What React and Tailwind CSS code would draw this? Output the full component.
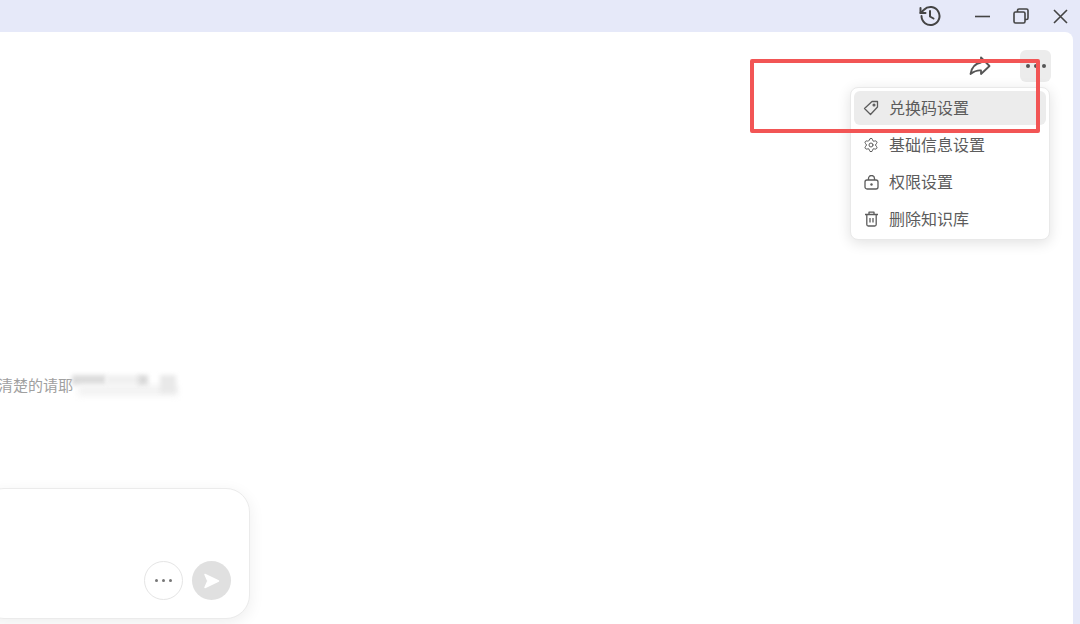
import React from 'react';
import { Settings } from 'lucide-react';

const menuItems = [
  { label: '兑换码设置', icon: 'tag', active: true },
  { label: '基础信息设置', icon: 'gear' },
  { label: '权限设置', icon: 'lock' },
  { label: '删除知识库', icon: 'trash' },
];

const HistoryIcon = () => (
  <svg width="22" height="22" viewBox="0 0 22 22" fill="none" stroke="currentColor" strokeWidth="2" strokeLinecap="round" strokeLinejoin="round">
    <path d="M2.5 11A9 9 0 1 0 5 4.8L1.5 8" />
    <path d="M1.5 3V8H6.5" />
    <path d="M11 6V11.5L14.5 13.5" />
  </svg>
);

const MinimizeIcon = () => (
  <svg width="15" height="15" viewBox="0 0 15 15" stroke="currentColor" strokeWidth="1.6">
    <path d="M0 7.5H15" />
  </svg>
);

const RestoreIcon = () => (
  <svg width="16" height="16" viewBox="0 0 16 16" fill="none" stroke="currentColor" strokeWidth="1.6" strokeLinejoin="round">
    <rect x="1" y="4" width="11" height="11" rx="1.5" />
    <path d="M4.5 4V2.5A1.5 1.5 0 0 1 6 1h7.5A1.5 1.5 0 0 1 15 2.5V10a1.5 1.5 0 0 1-1.5 1.5H12" />
  </svg>
);

const CloseIcon = () => (
  <svg width="15" height="15" viewBox="0 0 15 15" stroke="currentColor" strokeWidth="1.6">
    <path d="M1 1 14 14M14 1 1 14" />
  </svg>
);

const ShareIcon = () => (
  <svg width="22" height="20" viewBox="0 0 22 20" fill="none" stroke="currentColor" strokeWidth="1.8" strokeLinejoin="round">
    <path d="M12 1.5 20.5 10 12 18V14.5C8 14 5 15.5 1.5 18 2.5 12 6 7.5 12 6.5Z" />
  </svg>
);

const TagIcon = () => (
  <svg width="16" height="16" viewBox="0 0 16 16" fill="none" stroke="currentColor" strokeWidth="1.3" strokeLinejoin="round">
    <path d="M9 1.5H14.5V7L7.5 14.5 1.5 8.5Z" />
    <circle cx="11" cy="5" r="0.9" />
  </svg>
);

const LockIcon = () => (
  <svg width="15" height="15" viewBox="0 0 15 15" fill="none" stroke="currentColor" strokeWidth="1.3">
    <rect x="1" y="5" width="13" height="9" rx="2" />
    <path d="M4.5 5V3.5a3 3 0 0 1 6 0V5" />
    <circle cx="7.5" cy="9.5" r="1.2" fill="currentColor" stroke="none" />
  </svg>
);

const TrashIcon = () => (
  <svg width="15" height="16" viewBox="0 0 15 16" fill="none" stroke="currentColor" strokeWidth="1.3" strokeLinejoin="round">
    <path d="M1 3.5H14M5 3.5V1.2H10V3.5" />
    <path d="M2.8 3.5V13.5A1.5 1.5 0 0 0 4.3 15H10.7A1.5 1.5 0 0 0 12.2 13.5V3.5" />
    <path d="M6 7V11.5M9 7V11.5" />
  </svg>
);

const MenuIcon = ({ name }) => {
  if (name === 'tag') return <TagIcon />;
  if (name === 'gear') return <Settings size={16} strokeWidth={1.5} />;
  if (name === 'lock') return <LockIcon />;
  return <TrashIcon />;
};

const SendIcon = () => (
  <svg width="17" height="16" viewBox="0 0 17 16" fill="white" stroke="white" strokeWidth="1.5" strokeLinejoin="round">
    <path d="M2 1.5 15.5 8 2 14.5 4.5 8.8H9V7.2H4.5Z" />
  </svg>
);

export default function App() {
  return (
    <div className="relative w-[1080px] h-[624px] overflow-hidden bg-[#e6e9f9] flex flex-col font-['Noto_Sans_CJK_SC','Noto_Sans',sans-serif]">
      {/* title bar */}
      <div className="h-8 shrink-0 flex items-center justify-end text-[#444] pr-[12px]">
        <div className="mr-[34px]"><HistoryIcon /></div>
        <div className="mr-[23px]"><MinimizeIcon /></div>
        <div className="mr-[24px]"><RestoreIcon /></div>
        <CloseIcon />
      </div>

      {/* main panel */}
      <div className="relative flex-1 w-[1073px] bg-white rounded-tr-lg flex flex-col">
        <div className="h-8 shrink-0 mt-[18px] flex items-center justify-end pr-[22px]">
          <div className="text-[#555] mr-[29px] -mt-[1px]"><ShareIcon /></div>
          <div className="w-[31px] h-8 rounded-md bg-[#ececec] flex items-center justify-center gap-[4px]">
            <span className="w-1 h-1 rounded-full bg-[#555]" />
            <span className="w-1 h-1 rounded-full bg-[#555]" />
            <span className="w-1 h-1 rounded-full bg-[#555]" />
          </div>
        </div>

        <div className="mt-[291px] flex items-center -ml-[2px] h-6 text-[15px] text-[#a0a0a0] whitespace-nowrap">
          <span>清楚的请耶</span>
          <div className="relative -ml-[3px] w-[110px] h-6">
            <div className="absolute left-[2px] top-[2px] w-[34px] h-[10px] bg-[#dcdcdc] blur-[2px]" />
            <div className="absolute left-[8px] top-[12px] w-[100px] h-[11px] bg-[#f3f3f3] blur-[3px]" />
            <div className="absolute left-[36px] top-[2px] w-[34px] h-[10px] bg-[#f0f0f0] blur-[2px]" />
            <div className="absolute left-[68px] top-[2px] w-[10px] h-[10px] bg-[#dadada] blur-[2px]" />
            <div className="absolute left-[90px] top-[2px] w-[16px] h-[18px] bg-[#e9e9e9] blur-[2px]" />
          </div>
        </div>

        {/* input card */}
        <div className="mt-[91px] -ml-5 w-[270px] h-[131px] bg-white rounded-[24px] border border-[#ebebeb] shadow-[0_4px_16px_rgba(0,0,0,0.07)] flex items-end justify-end gap-[9px] pr-[18px] pb-[18px]">
          <div className="w-[39px] h-[39px] rounded-full border border-[#e5e5e5] flex items-center justify-center gap-[4px]">
            <span className="w-[3px] h-[3px] rounded-full bg-[#777]" />
            <span className="w-[3px] h-[3px] rounded-full bg-[#777]" />
            <span className="w-[3px] h-[3px] rounded-full bg-[#777]" />
          </div>
          <div className="w-[39px] h-[39px] rounded-full bg-[#e0e0e0] flex items-center justify-center">
            <SendIcon />
          </div>
        </div>

        {/* dropdown */}
        <div className="absolute left-[850px] top-[55px] w-[200px] h-[153px] bg-white rounded-lg border border-[#e9e9e9] shadow-[0_3px_14px_rgba(0,0,0,0.12)] p-[3px] flex flex-col gap-[3px] text-[#5c5c5c]">
          {menuItems.map((item) => (
            <div
              key={item.label}
              className={`h-[34px] rounded-md flex items-center gap-[10px] pl-[9px] ${item.active ? 'bg-[#ececec]' : ''}`}
            >
              <div className="w-4 flex justify-center"><MenuIcon name={item.icon} /></div>
              <span className="text-base leading-none -mt-[2px]">{item.label}</span>
            </div>
          ))}
        </div>
      </div>

      {/* red annotation box */}
      <div className="absolute left-[750px] top-[59px] w-[290px] h-[74px] border-[4px] border-[#f25555] rounded-[2px]" />
    </div>
  );
}
